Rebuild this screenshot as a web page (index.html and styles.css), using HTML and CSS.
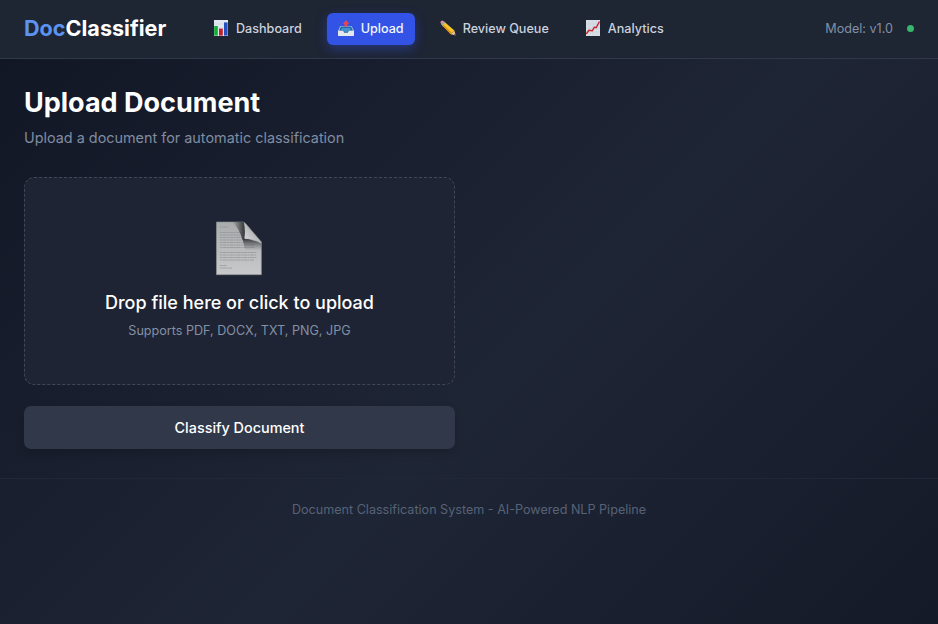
FILE: index.html
```html
<!DOCTYPE html>
<html lang="en">
<head>
<meta charset="utf-8">
<title>DocClassifier</title>
<link rel="stylesheet" href="styles.css">
</head>
<body>
<header class="navbar">
  <div class="brand"><span class="brand-accent">Doc</span>Classifier</div>
  <nav class="nav-links">
    <a class="nav-link">
      <svg class="icon" viewBox="0 0 16 16"><path fill="#e1e8f0" d="M1 0h14v16H1z"/><path stroke="#b7c5d5" stroke-width=".4" d="M1 4h14M1 8h14M1 12h14"/><path fill="#11ad35" d="M1.2 6h3.6v9.6H1.2z"/><path fill="#c52026" d="M6 8.6h3.8v7H6z"/><path fill="#244fbd" d="M11 2.4h3.6v13.2H11z"/></svg>
      <span>Dashboard</span>
    </a>
    <a class="nav-link active">
      <svg class="icon" viewBox="0 0 16 16"><path fill="#a9c8e4" d="M2.3 6h11.4L16 11v4.6H0V11z"/><path fill="#216cad" d="M2.8 6.5h10.4l1.7 4.2-4.1.4-1 1.8H6.2l-1-1.8-4.1-.4z"/><path fill="#428fcf" d="M4 8h8l1 2.5-3 .5-1 1H7l-1-1-3-.5z"/><path fill="#e4e8ea" d="M0 10.7h4.9l1.2 2h3.8l1.2-2H16v4.6q0 .7-.7.7H.7q-.7 0-.7-.7z"/><path fill="#ed4350" d="m8 .3 3.3 3.4H9.6v2.7H6.4V3.7H4.7z"/></svg>
      <span>Upload</span>
    </a>
    <a class="nav-link">
      <svg class="icon" viewBox="0 0 16 16"><path fill="#e78c93" d="M.4 2.4Q.5.5 2.7.4l2 1.7-2.9 3z"/><path fill="#8babc1" d="m4 1.5 2 1.7-3.1 3.2-1.7-2z"/><path fill="#f8c52e" d="m5.2 2.5 9.2 8.1-3.6 3.7-8.5-8.7z"/><path fill="#d99113" d="m2.3 5.6 1-1 8.7 8.4-1.2 1.3z"/><path fill="#e9c18f" d="m14.4 10.6 1.3 4.9-4.9-1.2z"/><path fill="#3b3435" d="m15.3 13.8.5 1.8-1.9-.5z"/></svg>
      <span>Review Queue</span>
    </a>
    <a class="nav-link">
      <svg class="icon" viewBox="0 0 16 16"><path fill="#d7dee5" d="M1 0h14v16H1z"/><path stroke="#c3cdd8" stroke-width=".4" d="M1 4h14M1 8h14M1 12h14M4.5 0v16M8 0v16M11.5 0v16"/><path fill="none" stroke="#c92b35" stroke-width="1.5" d="m1.3 14 2.5-3.7 3.5.5 2-3.6 2 .3 3.2-6"/></svg>
      <span>Analytics</span>
    </a>
  </nav>
  <div class="model"><span>Model: v1.0</span><span class="status-dot"></span></div>
</header>
<main class="content">
  <h1>Upload Document</h1>
  <p class="subtitle">Upload a document for automatic classification</p>
  <section class="upload-panel">
    <div class="dropzone">
      <svg class="file-icon" viewBox="0.6 0 48 56">
        <defs>
          <linearGradient id="paper" x1="0" y1="0" x2="0" y2="1"><stop stop-color="#a9acad"/><stop offset="1" stop-color="#c8c9ca"/></linearGradient>
          <linearGradient id="curl" x1=".1" y1=".9" x2=".7" y2=".3"><stop stop-color="#d4d6d6"/><stop offset="1" stop-color="#a9acae"/></linearGradient>
          <linearGradient id="shade" x1="0" x2="1"><stop stop-color="#303436" stop-opacity="0"/><stop offset="1" stop-color="#303436"/></linearGradient>
          <linearGradient id="fold-shade" x1="0" y1="0" x2="0" y2="1"><stop stop-color="#303436"/><stop offset="1" stop-color="#606466" stop-opacity="0"/></linearGradient>
        </defs>
        <path fill="url(#paper)" stroke="#8c9092" stroke-width=".6" d="M1 1h26q2 0 3.5 1.8L46 21v32.7H1z"/>
        <path stroke="#8c9092" stroke-width=".65" stroke-dasharray="2 .5 4 .4" d="M4.5 6h8M4.5 11.5h23M4.5 14h23M4.5 16.5h23M4.5 19h24M4.5 21.5h24M4.5 24h35M4.5 26.5h35M4.5 31.5h37M4.5 34h36M4.5 36.5h37M4.5 39h34M4.5 44.5h7M4.5 47h12"/>
        <path fill="url(#shade)" d="M17 1h10q2 0 2.4 2.5v15H27Q24 8 17 1z"/>
        <path fill="url(#fold-shade)" d="M27 17.5q9 0 19 5v7H30z"/>
        <path fill="url(#curl)" d="M28.5 1.5 46 22q-5-4.5-17-4.5Q30.5 10 28.5 1.5z"/>
      </svg>
      <div class="drop-title">Drop file here or click to upload</div>
      <div class="drop-hint">Supports PDF, DOCX, TXT, PNG, JPG</div>
    </div>
    <button class="classify">Classify Document</button>
  </section>
</main>
<footer class="footer">Document Classification System - AI-Powered NLP Pipeline</footer>
</body>
</html>
```
FILE: styles.css
```css
* { box-sizing: border-box; }
html { height: 100%; }
body {
  margin: 0;
  min-height: 100%;
  font-family: Inter, sans-serif;
  color: #fff;
  background: linear-gradient(135deg, #111625 0%, #1e2534 56%, #151a29 100%);
}
.navbar {
  display: flex;
  align-items: center;
  height: 59px;
  padding: 0 24px 1px;
  background: #1e2533;
  border-bottom: 1px solid #303949;
}
.brand { width: 142px; padding-bottom: 2px; font-size: 21.6px; font-weight: 700; white-space: nowrap; }
.brand-accent { color: #5b94f0; }
.nav-links { display: flex; gap: 14px; margin-left: 36px; }
.nav-link {
  display: flex;
  align-items: center;
  gap: 7px;
  height: 32px;
  padding: 0 11px 2px;
  border-radius: 6px;
  color: #cbd2dd;
  font-size: 12.6px;
  font-weight: 500;
  white-space: nowrap;
}
.nav-link span { padding-top: 2px; }
.nav-link.active { color: #f3f6ff; background: #3253e5; box-shadow: 0 4px 12px rgba(50, 83, 229, 0.4); }
.icon { width: 16px; height: 16px; flex: none; }
.model { display: flex; align-items: center; gap: 14px; margin-left: auto; padding-bottom: 1px; font-size: 12.6px; color: #8390a6; }
.status-dot { width: 7px; height: 7px; border-radius: 50%; background: #37b76b; }
.content { padding: 26px 24px 29px; }
h1 { margin: 0; font-size: 27px; line-height: 36px; font-weight: 700; }
.subtitle { margin: 6px 0 28px; font-size: 14.4px; line-height: 22px; color: #7f8ca2; }
.upload-panel { width: 431px; }
.dropzone {
  display: flex;
  flex-direction: column;
  align-items: center;
  height: 208px;
  padding-top: 43px;
  border: 1px dashed #3e4858;
  border-radius: 10px;
  background: #1e2433;
}
.file-icon { width: 48px; height: 56px; }
.drop-title { margin-top: 14px; font-size: 18px; line-height: 24px; font-weight: 500; }
.drop-hint { margin-top: 6px; font-size: 12.6px; line-height: 20px; color: #8390a6; }
.classify {
  display: block;
  width: 100%;
  height: 43px;
  margin-top: 21px;
  padding: 0;
  border: 0;
  border-radius: 7px;
  font: 500 14.4px Inter, sans-serif;
  color: #fff;
  background: #30384a;
  box-shadow: 0 4px 10px rgba(0, 0, 0, 0.15);
}
.footer { padding-top: 21px; border-top: 1px solid #202737; font-size: 12.6px; line-height: 20px; text-align: center; color: #576277; }
```
